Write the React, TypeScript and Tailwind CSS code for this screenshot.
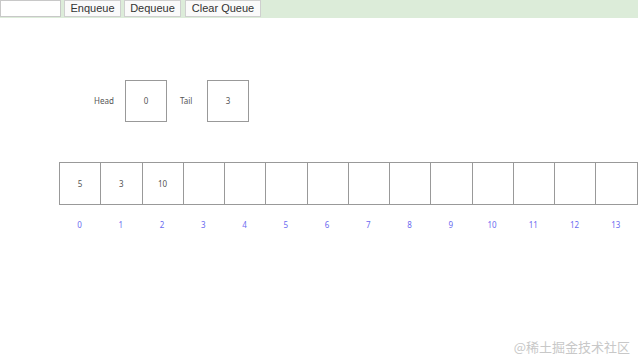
import React from "react";

const cells = ["5", "3", "10", "", "", "", "", "", "", "", "", "", "", "", ""];

export default function App() {
  return (
    <div className="relative w-[638px] h-[359px] bg-white overflow-hidden" style={{ fontFamily: "'Noto Sans', sans-serif" }}>
      <div className="flex items-stretch h-[18px] bg-[#dcecd9] gap-[3px]" style={{ fontFamily: "'Liberation Sans', Arial, sans-serif" }}>
        <div className="w-[61px] h-[17px] bg-white border border-[#c8c8c8]" />
        <div className="w-[57px] h-[17px] bg-[#fafafa] border border-[#cfcfcf] text-[11px] leading-[15px] text-[#333] flex items-center justify-center">Enqueue</div>
        <div className="w-[57px] h-[17px] bg-[#fafafa] border border-[#cfcfcf] text-[11px] leading-[15px] text-[#333] flex items-center justify-center">Dequeue</div>
        <div className="ml-[1px] w-[76px] h-[17px] bg-[#fafafa] border border-[#cfcfcf] text-[11px] leading-[15px] text-[#333] flex items-center justify-center">Clear Queue</div>
      </div>

      <div className="flex items-center mt-[62px] ml-[94px] text-[8px] text-[#555]">
        <span className="w-[31px]">Head</span>
        <div className="w-[42px] h-[42px] border border-[#999] flex items-center justify-center">0</div>
        <span className="ml-[13px] w-[27px]">Tail</span>
        <div className="w-[42px] h-[42px] border border-[#999] flex items-center justify-center">3</div>
      </div>

      <div className="flex ml-[59px] mt-[40px] text-[8px] text-[#555]">
        {cells.map((c, i) => (
          <div key={i} className="w-[41.25px] shrink-0 flex flex-col items-center">
            <div className="w-full h-[43px] border-y border-l border-[#999] flex items-center justify-center">{c}</div>
            <div className="mt-[14px] text-[#6b6bf0] text-[8px] leading-[12px]">{i < 14 ? i : ""}</div>
          </div>
        ))}
      </div>

      <div className="absolute right-[8px] bottom-[3px] text-[13px] text-[#c8c8c8]" style={{ fontFamily: "'Noto Sans CJK SC', sans-serif" }}>
        @稀土掘金技术社区
      </div>
    </div>
  );
}
